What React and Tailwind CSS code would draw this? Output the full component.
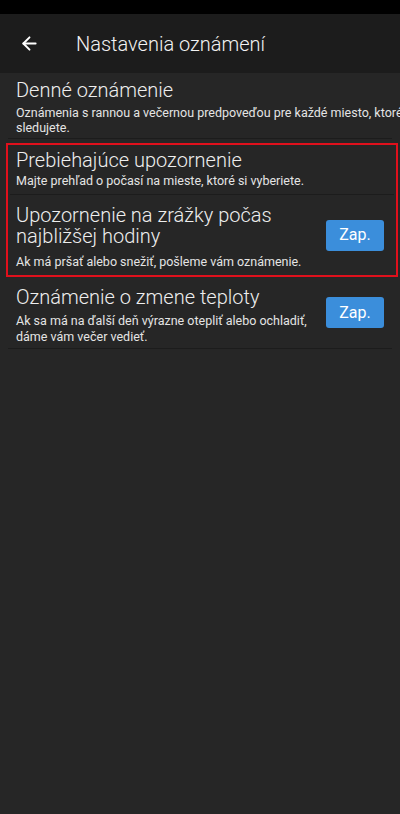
import { ArrowLeft } from 'lucide-react'

const font = { fontFamily: 'Roboto, "Noto Sans", sans-serif' }

function ZapButton() {
  return (
    <button className="flex h-[31px] w-[58px] shrink-0 items-center justify-center rounded-[3px] bg-[#3b8edb] text-[16px] text-white">
      Zap.
    </button>
  )
}

function Separator({ className = '' }) {
  return <div className={`h-px bg-[#1c1c1c] ${className}`} />
}

export default function App() {
  return (
    <div className="flex min-h-[814px] w-[400px] flex-col overflow-hidden bg-[#262626] text-[#eeeeee]" style={font}>
      {/* status bar */}
      <div className="h-[14px] bg-black" />

      {/* toolbar */}
      <header className="flex h-[59px] items-center bg-[#1c1c1c]">
        <div className="flex w-[76px] items-center pl-[19px]">
          <ArrowLeft size={21} strokeWidth={2.2} className="text-white" />
        </div>
        <h1 className="text-[20px] font-light leading-6 text-[#f2f2f2]">Nastavenia oznámení</h1>
      </header>

      {/* daily notification */}
      <section className="pt-[5px]">
        <div className="pl-4">
          <div className="text-[20px] font-light leading-6">Denné oznámenie</div>
          <p className="mt-[3px] whitespace-nowrap text-[12.5px] leading-[15px] text-[#e4e4e4]">
            Oznámenia s rannou a večernou predpoveďou pre každé miesto, ktoré
            <br />
            sledujete.
          </p>
        </div>
        <Separator className="mx-2 mt-[3px]" />
      </section>

      {/* highlighted group */}
      <div className="mt-[4px] ml-[6px] mr-[2px] border-2 border-[#e0101c]">
        <section className="pt-[3px]">
          <div className="pl-2">
            <div className="text-[20px] font-light leading-6">Prebiehajúce upozornenie</div>
            <p className="mt-[1px] text-[12.5px] leading-4 text-[#e4e4e4]">
              Majte prehľad o počasí na mieste, ktoré si vyberiete.
            </p>
          </div>
          <Separator className="mx-[2px] mt-[5px]" />
        </section>

        <section className="flex items-center pr-[12px] pl-2">
          <div className="flex-1 pt-[10px] pb-[5px]">
            <div className="text-[20px] font-light leading-[21px]">
              Upozornenie na zrážky počas
              <br />
              najbližšej hodiny
            </div>
            <p className="mt-[7px] text-[12.5px] leading-4 text-[#e4e4e4]">
              Ak má pršať alebo snežiť, pošleme vám oznámenie.
            </p>
          </div>
          <ZapButton />
        </section>
      </div>

      {/* temperature change */}
      <section>
        <div className="flex items-center pr-4 pl-4">
          <div className="flex-1 pt-[8px] pb-[3px]">
            <div className="text-[20px] font-light leading-6">Oznámenie o zmene teploty</div>
            <p className="mt-[4px] text-[12.5px] leading-4 text-[#e4e4e4]">
              Ak sa má na ďalší deň výrazne otepliť alebo ochladiť,
              <br />
              dáme vám večer vedieť.
            </p>
          </div>
          <ZapButton />
        </div>
        <Separator className="mx-2" />
      </section>
    </div>
  )
}
